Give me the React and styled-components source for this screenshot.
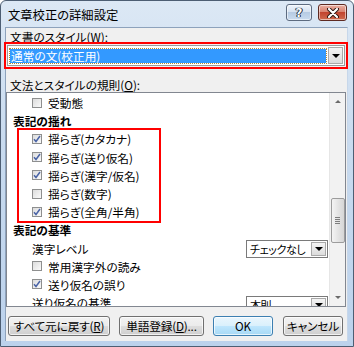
import React from "react";
import styled, { createGlobalStyle } from "styled-components";

const GlobalStyle = createGlobalStyle`
  html, body { margin: 0; padding: 0; background: #fff; }
  body {
    font-family: "Noto Sans CJK JP", "Noto Sans", sans-serif;
    font-size: 11.7px;
    color: #000;
  }
`;

const Window = styled.div`
  width: 354px;
  height: 347px;
  box-sizing: border-box;
  border: 1px solid #4d5e73;
  border-radius: 6px 6px 0 0;
  background: linear-gradient(to bottom, #dce8f5 0%, #c9dbef 40%, #bcd2ec 100%);
  padding: 0 5px 5px 4px;
  display: flex;
  flex-direction: column;
  overflow: hidden;
`;

const TitleBar = styled.div`
  height: 26px;
  display: flex;
  align-items: flex-start;
  justify-content: space-between;
`;

const Title = styled.div`
  padding: 6px 0 0 3px;
  font-size: 12.3px;
  line-height: 16px;
  font-feature-settings: "palt";
`;

const CaptionButtons = styled.div`
  display: flex;
  gap: 6px;
  padding: 3px 1px 0 0;
`;

const CaptionButton = styled.div`
  width: ${({ wide }) => (wide ? 29 : 26)}px;
  height: 17px;
  box-sizing: border-box;
  border: 1px solid ${({ danger }) => (danger ? "#5e2a22" : "#5d6b80")};
  border-radius: 3px;
  display: flex;
  align-items: center;
  justify-content: center;
  background: ${({ danger }) =>
    danger
      ? "linear-gradient(to bottom, #e9b0a4 0%, #d98371 45%, #c2442f 50%, #cf6a4e 100%)"
      : "linear-gradient(to bottom, #eef3fa 0%, #d6e2f1 45%, #b7cbe3 50%, #c9dbef 100%)"};
  box-shadow: inset 0 0 0 1px rgba(255, 255, 255, 0.55);
  color: #fff;
  font-family: "DejaVu Sans", sans-serif;
  font-weight: bold;
  font-size: 12px;
  text-shadow: 0 0 1px #1d2a3c, 0 0 1px #1d2a3c, 1px 0 0 #1d2a3c, -1px 0 0 #1d2a3c;
`;

const Client = styled.div`
  flex: 1;
  background: #f0f0f0;
  border-left: 1px solid #8da2bc;
  border-top: 1px solid #8da2bc;
  border-right: 1px solid #c7d7ea;
  display: flex;
  flex-direction: column;
  font-feature-settings: "palt";
`;

const Label = styled.div`
  margin-top: ${({ top }) => top}px;
  padding-left: 4px;
  height: 14px;
  line-height: 14px;
  u { text-decoration: underline; }
`;

const Combo = styled.div`
  margin: 1px 0 0 1px;
  width: 338px;
  height: 21px;
  box-sizing: border-box;
  border: 1px solid #9a9a9a;
  background: #fff;
  display: flex;
  align-items: center;
  padding: 0 1px 0 2px;
  outline: 2px solid #ff0000;
  outline-offset: 1px;
`;

const Selected = styled.div`
  flex: 1;
  height: 14px;
  margin-right: 2px;
  background: #3399ff;
  color: #fff;
  line-height: 14px;
  padding-left: 1px;
  outline: 1px dotted #b98a2e;
`;

const DropButton = styled.div`
  width: ${({ w }) => w || 15}px;
  height: ${({ h }) => h || 17}px;
  flex: none;
  box-sizing: border-box;
  border: 1px solid #a9a9a9;
  background: linear-gradient(to bottom, #f4f4f4, #dcdcdc);
  display: flex;
  align-items: center;
  justify-content: center;
`;

const Arrow = styled.span`
  width: 0;
  height: 0;
  border-left: 4px solid transparent;
  border-right: 4px solid transparent;
  border-top: 4px solid #000;
`;

const ListBox = styled.div`
  width: 340px;
  height: 215px;
  box-sizing: border-box;
  border: 1px solid #828790;
  background: #fff;
  display: flex;
  overflow: hidden;
`;

const ListContent = styled.div`
  flex: 1;
  padding-top: 0.5px;
  overflow: hidden;
`;

const Row = styled.div`
  height: 18.2px;
  display: flex;
  align-items: center;
  justify-content: space-between;
  padding-left: ${({ indent }) => indent}px;
  padding-right: 1px;
  font-weight: ${({ bold }) => (bold ? 700 : 400)};
  white-space: nowrap;
`;

const RowMain = styled.div`
  display: flex;
  align-items: center;
  gap: 6px;
`;

const Group = styled.div`
  margin-left: 12px;
  width: 140px;
  outline: 2px solid #ff0000;
`;

const Box = styled.span`
  width: 10px;
  height: 10px;
  box-sizing: border-box;
  border: 1px solid #8e8f8f;
  background: linear-gradient(135deg, #dcdcdc, #fafafa);
  display: flex;
  align-items: center;
  justify-content: center;
`;

const Select = styled.div`
  width: 82px;
  height: 18px;
  box-sizing: border-box;
  border: 1px solid #7a7a7a;
  background: #fff;
  display: flex;
  align-items: center;
  justify-content: space-between;
  padding: 0 1px 0 3px;
  margin-top: ${({ shift }) => shift || 0}px;
  font-size: 11px;
  letter-spacing: -0.4px;
  overflow: hidden;
`;

const ScrollBar = styled.div`
  width: 16px;
  background: #f2f2f2;
  border-left: 1px solid #e6e6e6;
  box-sizing: border-box;
  display: flex;
  flex-direction: column;
  align-items: center;
`;

const ScrollArrow = styled.div`
  height: 17px;
  width: 100%;
  display: flex;
  align-items: center;
  justify-content: center;
`;

const SmallTri = styled.span`
  width: 0;
  height: 0;
  border-left: 3px solid transparent;
  border-right: 3px solid transparent;
  ${({ up }) => (up ? "border-bottom: 3px solid #6a6a6a;" : "border-top: 3px solid #6a6a6a;")}
`;

const Track = styled.div`
  flex: 1;
  width: 100%;
  display: flex;
  flex-direction: column;
  align-items: center;
`;

const Thumb = styled.div`
  margin-top: 88px;
  width: 14px;
  height: 45px;
  box-sizing: border-box;
  border: 1px solid #9c9c9c;
  border-radius: 2px;
  background: linear-gradient(to right, #f4f4f4, #e4e4e4 50%, #d6d6d6);
  display: flex;
  flex-direction: column;
  align-items: center;
  justify-content: center;
  gap: 1px;
`;

const Grip = styled.span`
  width: 5px;
  height: 1px;
  background: #7d7d7d;
`;

const ButtonRow = styled.div`
  margin-top: 9px;
  padding-left: 2px;
  display: flex;
  gap: 9px;
`;

const Button = styled.div`
  width: ${({ w }) => w}px;
  height: 20px;
  box-sizing: border-box;
  border: 1px solid ${({ primary }) => (primary ? "#3c7fb1" : "#707070")};
  border-radius: 3px;
  background: ${({ primary }) =>
    primary
      ? "linear-gradient(to bottom, #eaf6fd 0%, #d9f0fc 50%, #bee6fd 51%, #a7d9f5 100%)"
      : "linear-gradient(to bottom, #f2f2f2 0%, #ebebeb 50%, #dddddd 51%, #cfcfcf 100%)"};
  box-shadow: inset 0 0 0 1px rgba(255, 255, 255, 0.7);
  display: flex;
  align-items: center;
  justify-content: center;
  line-height: 14px;
  letter-spacing: -0.2px;
  white-space: nowrap;
  margin-left: ${({ extra }) => extra || 0}px;
  u { text-decoration: underline; }
`;

const Check = ({ checked }) => (
  <Box>
    {checked && (
      <svg width="8" height="8" viewBox="0 0 8 8">
        <path d="M1 4.2 L3 6.5 L7 1" fill="none" stroke="#4a64a6" strokeWidth="1.5" />
      </svg>
    )}
  </Box>
);

const CheckRow = ({ label, checked, indent = 25 }) => (
  <Row indent={indent}>
    <RowMain>
      <Check checked={checked} />
      <span>{label}</span>
    </RowMain>
  </Row>
);

const variations = [
  ["揺らぎ(カタカナ)", true],
  ["揺らぎ(送り仮名)", true],
  ["揺らぎ(漢字/仮名)", true],
  ["揺らぎ(数字)", false],
  ["揺らぎ(全角/半角)", true],
];

export default function App() {
  return (
    <>
      <GlobalStyle />
      <Window>
        <TitleBar>
          <Title>文章校正の詳細設定</Title>
          <CaptionButtons>
            <CaptionButton>?</CaptionButton>
            <CaptionButton danger wide>
              <svg width="12" height="10" viewBox="0 0 12 10">
                <path d="M2 1 L10 9 M10 1 L2 9" stroke="#2a1410" strokeWidth="4" strokeLinecap="round" />
                <path d="M2 1 L10 9 M10 1 L2 9" stroke="#fff" strokeWidth="2.2" strokeLinecap="round" />
              </svg>
            </CaptionButton>
          </CaptionButtons>
        </TitleBar>
        <Client>
          <Label top={2}>
            文書のスタイル(<u>W</u>):
          </Label>
          <Combo>
            <Selected>通常の文(校正用)</Selected>
            <DropButton>
              <Arrow />
            </DropButton>
          </Combo>
          <Label top={12}>
            文法とスタイルの規則(<u>O</u>):
          </Label>
          <ListBox>
            <ListContent>
              <CheckRow label="受動態" checked={false} />
              <Row indent={6} bold>表記の揺れ</Row>
              <Group>
                {variations.map(([label, checked]) => (
                  <CheckRow key={label} label={label} checked={checked} indent={13} />
                ))}
              </Group>
              <Row indent={6} bold>表記の基準</Row>
              <Row indent={25}>
                <span>漢字レベル</span>
                <Select shift={2}>
                  <span>チェックなし</span>
                  <DropButton w={15} h={14}>
                    <Arrow />
                  </DropButton>
                </Select>
              </Row>
              <CheckRow label="常用漢字外の読み" checked={false} />
              <CheckRow label="送り仮名の誤り" checked={true} />
              <Row indent={25}>
                <span>送り仮名の基準</span>
                <Select shift={5}>
                  <span>本則</span>
                  <DropButton w={15} h={14}>
                    <Arrow />
                  </DropButton>
                </Select>
              </Row>
            </ListContent>
            <ScrollBar>
              <ScrollArrow>
                <SmallTri up />
              </ScrollArrow>
              <Track>
                <Thumb>
                  <Grip />
                  <Grip />
                  <Grip />
                  <Grip />
                </Thumb>
              </Track>
              <ScrollArrow>
                <SmallTri />
              </ScrollArrow>
            </ScrollBar>
          </ListBox>
          <ButtonRow>
            <Button w={102}>
              すべて元に戻す(<u>R</u>)
            </Button>
            <Button w={85}>
              単語登録(<u>D</u>)...
            </Button>
            <Button w={60} primary>OK</Button>
            <Button w={60} extra={1}>キャンセル</Button>
          </ButtonRow>
        </Client>
      </Window>
    </>
  );
}
